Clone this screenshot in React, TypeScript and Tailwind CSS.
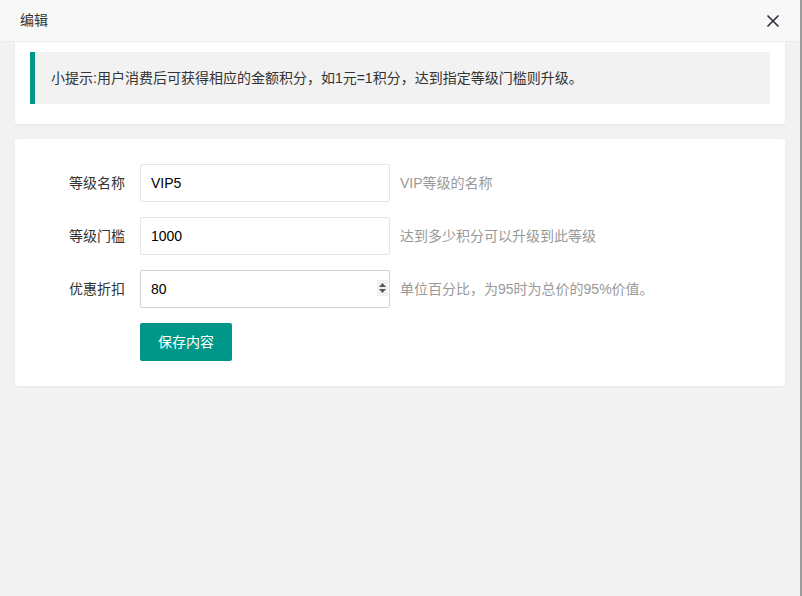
export default function App() {
  const font = {
    fontFamily: '"Liberation Sans", "Noto Sans CJK SC", sans-serif',
  };

  const rows = [
    { label: "等级名称", value: "VIP5", tip: "VIP等级的名称" },
    { label: "等级门槛", value: "1000", tip: "达到多少积分可以升级到此等级" },
  ];

  return (
    <div
      style={font}
      className="relative flex h-[596px] w-[802px] flex-col overflow-hidden bg-[#f2f2f2] text-[14px] text-[#333]"
    >
      {/* HEADER */}
      <div className="flex h-[42px] shrink-0 items-center justify-between border-b border-[#eee] bg-[#f8f8f8] pl-[20px] pr-[22px]">
        <span className="text-[14px] text-[#333]">编辑</span>
        <svg width="14" height="14" viewBox="0 0 14 14" className="mt-[1px]">
          <path d="M1.5 1.5 L12.5 12.5 M12.5 1.5 L1.5 12.5" stroke="#2f2f3a" strokeWidth="1.6" />
        </svg>
      </div>

      {/* RIGHT EDGE */}
      <div className="absolute right-0 top-0 h-full w-[2px] bg-[#9c9c9c]" />

      <div className="flex flex-col gap-[15px] pl-[15px] pr-[17px]">
        {/* TIP CARD */}
        <div className="rounded-b-[2px] bg-white px-[15px] pb-[20px] pt-[10px] shadow-[0_1px_2px_rgba(0,0,0,0.05)]">
          <div className="flex h-[52px] items-center border-l-[5px] border-[#009688] bg-[#f2f2f2] pl-[16px] text-[14px] text-[#333]">
            小提示:用户消费后可获得相应的金额积分，如1元=1积分，达到指定等级门槛则升级。
          </div>
        </div>

        {/* FORM CARD */}
        <div className="flex flex-col gap-[15px] rounded-[2px] bg-white pb-[25px] pt-[25px] shadow-[0_1px_2px_rgba(0,0,0,0.05)]">
          {rows.map((r) => (
            <div key={r.label} className="flex items-center">
              <label className="w-[125px] pr-[15px] text-right text-[14px] text-[#333]">
                {r.label}
              </label>
              <div className="flex h-[38px] w-[250px] items-center rounded-[2px] border border-[#e6e6e6] bg-white pl-[10px] text-[14px] text-[#000]">
                {r.value}
              </div>
              <span className="pl-[10px] text-[14px] text-[#999]">{r.tip}</span>
            </div>
          ))}

          <div className="flex items-center">
            <label className="w-[125px] pr-[15px] text-right text-[14px] text-[#333]">
              优惠折扣
            </label>
            <div className="relative flex h-[38px] w-[250px] items-center rounded-[2px] border border-[#d2d2d2] bg-white pl-[10px] text-[14px] text-[#000]">
              80
              {/* spinner */}
              <div className="absolute right-[1px] top-[9px] flex h-[16px] w-[11px] flex-col items-center justify-center gap-[2px] bg-[#f0f0f0]">
                <svg width="7" height="4" viewBox="0 0 7 4">
                  <path d="M0 4 L3.5 0 L7 4 Z" fill="#555" />
                </svg>
                <svg width="7" height="4" viewBox="0 0 7 4">
                  <path d="M0 0 L3.5 4 L7 0 Z" fill="#555" />
                </svg>
              </div>
            </div>
            <span className="pl-[10px] text-[14px] text-[#999]">
              单位百分比，为95时为总价的95%价值。
            </span>
          </div>

          <div className="flex items-center pl-[125px]">
            <button className="h-[38px] rounded-[2px] bg-[#009688] px-[18px] text-[14px] text-white">
              保存内容
            </button>
          </div>
        </div>
      </div>
    </div>
  );
}
